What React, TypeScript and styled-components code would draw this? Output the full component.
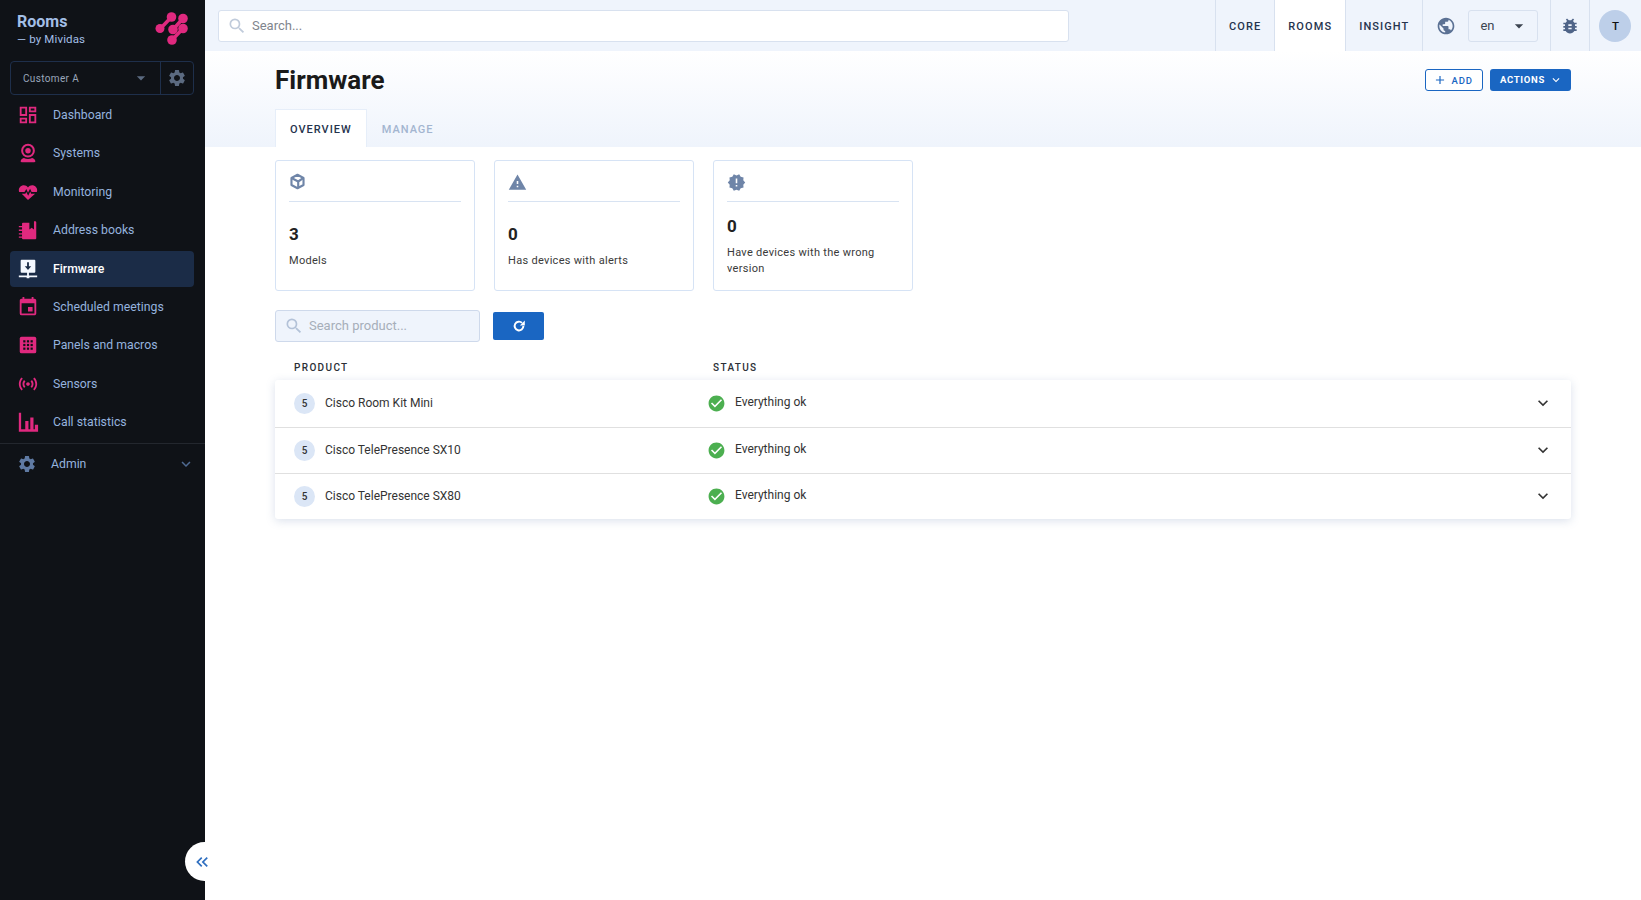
import styled, { createGlobalStyle } from 'styled-components';
import {
  MdSearch,
  MdSettings,
  MdPublic,
  MdBugReport,
  MdArrowDropDown,
  MdEvent,
  MdSensors,
  MdWarning,
  MdNewReleases,
  MdCheckCircle,
  MdExpandMore,
  MdAdd,
  MdKeyboardDoubleArrowLeft,
} from 'react-icons/md';

const PINK = '#e0297f';
const SIDEBAR_BG = '#0f1217';

const GlobalStyle = createGlobalStyle`
  html, body { margin: 0; height: 100%; }
  body { font-family: Roboto, "Liberation Sans", sans-serif; background: #fff; }
  * { box-sizing: border-box; }
`;

const DashboardIcon = () => (
  <svg viewBox="0 0 24 24" width="22" height="22" fill="currentColor">
    <path d="M19 5v2h-4V5h4M9 5v6H5V5h4m10 8v6h-4v-6h4M9 17v2H5v-2h4M21 3h-8v6h8V3zM11 3H3v10h8V3zm10 8h-8v10h8V11zm-10 4H3v6h8v-6z" />
  </svg>
);

const CameraIcon = () => (
  <svg viewBox="0 0 24 24" width="22" height="22" fill="currentColor">
    <path
      fillRule="evenodd"
      d="M12 2a7.5 7.5 0 1 1 0 15 7.5 7.5 0 0 1 0-15zm0 2.2a5.3 5.3 0 1 0 0 10.6 5.3 5.3 0 0 0 0-10.6z"
    />
    <circle cx="12" cy="9.5" r="3" />
    <path d="M7.5 17.5c2.7 1.4 6.3 1.4 9 0 2 .6 3.5 1.8 3.5 3.5 0 .7-.5 1-1 1H5c-.5 0-1-.3-1-1 0-1.7 1.500-2.900 3.500-3.500z" />
  </svg>
);

const HeartIcon = () => (
  <svg viewBox="0 0 24 24" width="20" height="20" fill="currentColor">
    <path d="M12 21.500 4.500 14h4.300l1.200-2 2.200 4.500 2.500-5 1 2.500h4.800L12 21.500z" />
    <path d="M7 4c2 0 3.800 1 5 2.600C13.200 5 15 4 17 4c3.300 0 6 2.600 6 5.800 0 .8-.2 1.500-.4 2.200h-6.300L14.500 8 12 13l-2-4.500L7.800 12H1.400C1.200 11.300 1 10.600 1 9.800 1 6.600 3.700 4 7 4z" />
  </svg>
);

const BookIcon = () => (
  <svg viewBox="0 0 24 24" width="22" height="22" fill="currentColor">
    <path d="M6.500 4h7v7.500l2.500-2 2.500 2V2.500H20c.6 0 1 .4 1 1V21c0 .6-.4 1-1 1H6.500c-.6 0-1-.4-1-1V5c0-.6.400-1 1-1z" />
    <path d="M2 7.500h5v1.500H2zM2 11.500h5v1.500H2zM2 15.500h5v1.500H2zM2 19h5v1.500H2z" />
  </svg>
);

const FirmwareIcon = () => (
  <svg viewBox="0 0 24 24" width="22" height="22">
    <path fill="#f4f8ff" d="M5 2h14c.6 0 1 .4 1 1v12c0 .6-.4 1-1 1h-6v3h9v2H13.500v1h-3v-1H2v-2h9v-3H5c-.6 0-1-.4-1-1V3c0-.6.400-1 1-1z" />
    <path fill="#1b2c47" d="M11 4.500h2V9h2.500L12 13 8.500 9H11z" />
  </svg>
);

const PanelIcon = () => (
  <svg viewBox="0 0 24 24" width="22" height="22">
    <rect x="3" y="3" width="18" height="18" rx="2" fill="currentColor" />
    {[8, 12, 16].map((y) =>
      [8, 12, 16].map((x) => <rect key={`${x}-${y}`} x={x - 1.2} y={y - 1.2} width="2.400" height="2.400" fill={SIDEBAR_BG} />),
    )}
  </svg>
);

const StatsIcon = () => (
  <svg viewBox="0 0 24 24" width="22" height="22" fill="currentColor">
    <path d="M2 2h2.500v18H9v-9h3.500v9h2V7H18v13h1.500v-5H23v7.500H2z" />
  </svg>
);

const CubeIcon = () => (
  <svg viewBox="0 0 24 24" width="17" height="17" fill="none" stroke="currentColor" strokeWidth="3" strokeLinejoin="round">
    <path d="M12 2.500 20.500 7v10L12 21.500 3.500 17V7z" />
    <path d="M3.500 7 13 12l7.500-5M13 12v9" />
  </svg>
);

const RefreshIcon = () => (
  <svg viewBox="0 0 24 24" width="14" height="14">
    <path d="M19.500 12a7.500 7.500 0 1 1-2.300-5.400" fill="none" stroke="#fff" strokeWidth="3.400" />
    <path d="M22 2.500v8.500h-8.500z" fill="#fff" />
  </svg>
);

const Logo = () => (
  <svg viewBox="5 5 33 33" width="33" height="33" fill={PINK}>
    <g stroke={PINK} strokeWidth="3.500" strokeLinecap="round">
      <path d="M10.500 21.500 21 10.500M32.500 12 23 22.500M32.500 22 22 33" />
    </g>
    <circle cx="10" cy="21.500" r="4.500" />
    <circle cx="21.500" cy="10" r="4.800" />
    <circle cx="33" cy="11.500" r="4.800" />
    <circle cx="23" cy="22.500" r="4.800" />
    <circle cx="33" cy="21.500" r="4.800" />
    <circle cx="22" cy="33" r="4.800" />
  </svg>
);

const navItems = [
  { label: 'Dashboard', icon: <DashboardIcon /> },
  { label: 'Systems', icon: <CameraIcon /> },
  { label: 'Monitoring', icon: <HeartIcon /> },
  { label: 'Address books', icon: <BookIcon /> },
  { label: 'Firmware', icon: <FirmwareIcon />, active: true },
  { label: 'Scheduled meetings', icon: <MdEvent size={22} /> },
  { label: 'Panels and macros', icon: <PanelIcon /> },
  { label: 'Sensors', icon: <MdSensors size={22} /> },
  { label: 'Call statistics', icon: <StatsIcon /> },
];

const stats = [
  { icon: <CubeIcon />, value: '3', label: 'Models' },
  { icon: <MdWarning size={19} />, value: '0', label: 'Has devices with alerts' },
  { icon: <MdNewReleases size={19} />, value: '0', label: 'Have devices with the wrong version' },
];

const products = ['Cisco Room Kit Mini', 'Cisco TelePresence SX10', 'Cisco TelePresence SX80'];

export default function App() {
  return (
    <>
      <GlobalStyle />
      <S.Page>
        <S.Sidebar>
          <S.Brand>
            <div>
              <S.BrandName>Rooms</S.BrandName>
              <S.BrandSub>— by Mividas</S.BrandSub>
            </div>
            <Logo />
          </S.Brand>
          <S.Customer>
            <S.CustomerName>
              Customer A
              <MdArrowDropDown size={20} />
            </S.CustomerName>
            <S.CustomerGear>
              <MdSettings size={20} />
            </S.CustomerGear>
          </S.Customer>
          <S.Nav>
            {navItems.map((item) => (
              <S.NavItem key={item.label} $active={item.active}>
                <S.NavIcon $active={item.active}>{item.icon}</S.NavIcon>
                {item.label}
              </S.NavItem>
            ))}
          </S.Nav>
          <S.AdminRow>
            <S.AdminIcon>
              <MdSettings size={20} />
            </S.AdminIcon>
            <S.AdminLabel>Admin</S.AdminLabel>
            <MdExpandMore size={18} />
          </S.AdminRow>
          <S.Collapse>
            <MdKeyboardDoubleArrowLeft size={20} />
          </S.Collapse>
        </S.Sidebar>

        <S.Main>
          <S.TopBar>
            <S.GlobalSearch>
              <MdSearch size={20} />
              Search...
            </S.GlobalSearch>
            <S.TopTab>CORE</S.TopTab>
            <S.TopTab $active>ROOMS</S.TopTab>
            <S.TopTab>INSIGHT</S.TopTab>
            <S.LangCell>
              <MdPublic size={20} />
              <S.LangSelect>
                en
                <MdArrowDropDown size={20} />
              </S.LangSelect>
            </S.LangCell>
            <S.BugCell>
              <MdBugReport size={20} />
            </S.BugCell>
            <S.AvatarCell>
              <S.Avatar>T</S.Avatar>
            </S.AvatarCell>
          </S.TopBar>

          <S.Header>
            <S.TitleRow>
              <S.Title>Firmware</S.Title>
              <S.Actions>
                <S.AddButton>
                  <MdAdd size={14} />
                  ADD
                </S.AddButton>
                <S.ActionsButton>
                  ACTIONS
                  <MdExpandMore size={14} />
                </S.ActionsButton>
              </S.Actions>
            </S.TitleRow>
            <S.Tabs>
              <S.Tab $active>OVERVIEW</S.Tab>
              <S.Tab>MANAGE</S.Tab>
            </S.Tabs>
          </S.Header>

          <S.Content>
            <S.Cards>
              {stats.map((stat) => (
                <S.Card key={stat.label}>
                  <S.CardIcon>{stat.icon}</S.CardIcon>
                  <S.CardBody>
                    <S.CardValue>{stat.value}</S.CardValue>
                    <S.CardLabel>{stat.label}</S.CardLabel>
                  </S.CardBody>
                </S.Card>
              ))}
            </S.Cards>

            <S.Filters>
              <S.ProductSearch>
                <MdSearch size={20} />
                Search product...
              </S.ProductSearch>
              <S.RefreshButton>
                <RefreshIcon />
              </S.RefreshButton>
            </S.Filters>

            <S.TableHead>
              <S.HeadProduct>PRODUCT</S.HeadProduct>
              <span>STATUS</span>
            </S.TableHead>
            <S.Table>
              {products.map((name) => (
                <S.Row key={name}>
                  <S.ProductCell>
                    <S.Count>5</S.Count>
                    {name}
                  </S.ProductCell>
                  <S.StatusCell>
                    <MdCheckCircle size={19} />
                    <span>Everything ok</span>
                  </S.StatusCell>
                  <MdExpandMore size={20} />
                </S.Row>
              ))}
            </S.Table>
          </S.Content>
        </S.Main>
      </S.Page>
    </>
  );
}

const S = {
  Page: styled.div`
    display: flex;
    height: 900px;
    overflow: hidden;
  `,
  Sidebar: styled.aside`
    position: relative;
    flex: 0 0 205px;
    background: ${SIDEBAR_BG};
    padding: 0 11px 0 10px;
    display: flex;
    flex-direction: column;
  `,
  Brand: styled.div`
    height: 61px;
    padding: 12px 6px 0 7px;
    display: flex;
    justify-content: space-between;
    align-items: flex-start;
  `,
  BrandName: styled.div`
    color: #a3bfe6;
    font-size: 16px;
    font-weight: 700;
    line-height: 19px;
  `,
  BrandSub: styled.div`
    color: #a3bfe6;
    font-size: 11.500px;
    line-height: 16px;
    letter-spacing: 0.15px;
  `,
  Customer: styled.div`
    display: flex;
    height: 34px;
    border: 1px solid #1e2f4b;
    border-radius: 4px;
    color: #8c99ad;
  `,
  CustomerName: styled.div`
    flex: 1;
    display: flex;
    align-items: center;
    justify-content: space-between;
    padding: 0 9px 0 12px;
    font-size: 10px;
    letter-spacing: 0.35px;
    color: #9aa7ba;
    svg {
      color: #5b6a80;
    }
  `,
  CustomerGear: styled.div`
    flex: 0 0 33px;
    display: flex;
    align-items: center;
    justify-content: center;
    border-left: 1px solid #1e2f4b;
    color: #5b6a80;
  `,
  Nav: styled.nav`
    display: flex;
    flex-direction: column;
    gap: 2.400px;
    margin-top: 2px;
    padding-bottom: 0.600px;
  `,
  NavItem: styled.div<{ $active?: boolean }>`
    display: flex;
    align-items: center;
    height: 36px;
    border-radius: 4px;
    font-size: 12.250px;
    color: ${({ $active }) => ($active ? '#ffffff' : '#95b3df')};
    background: ${({ $active }) => ($active ? '#1b2c47' : 'transparent')};
    font-weight: ${({ $active }) => ($active ? 500 : 400)};
  `,
  NavIcon: styled.span<{ $active?: boolean }>`
    flex: 0 0 43px;
    display: flex;
    justify-content: center;
    padding-right: 8px;
    color: ${({ $active }) => ($active ? '#ffffff' : PINK)};
  `,
  AdminRow: styled.div`
    display: flex;
    align-items: center;
    margin: 2px -11px 0 -10px;
    padding: 10px 10px 0 17px;
    border-top: 1px solid #23272e;
    color: #95b3df;
    font-size: 12.250px;
    > svg {
      color: #4f6a92;
    }
  `,
  AdminIcon: styled.span`
    flex: 0 0 34px;
    display: flex;
    color: #5f7aa3;
  `,
  AdminLabel: styled.span`
    flex: 1;
  `,
  Collapse: styled.div`
    position: absolute;
    left: 185px;
    top: 842px;
    width: 39px;
    height: 39px;
    border-radius: 50%;
    background: #fff;
    color: #2f6fc0;
    display: flex;
    align-items: center;
    justify-content: center;
    padding-right: 6px;
    z-index: 2;
  `,
  Main: styled.main`
    flex: 1;
    min-width: 0;
  `,
  TopBar: styled.header`
    display: flex;
    align-items: stretch;
    height: 51px;
    background: #eff4fc;
    padding-left: 13px;
  `,
  GlobalSearch: styled.div`
    flex: 0 0 851px;
    height: 32px;
    margin: 10px 146px 0 0;
    display: flex;
    align-items: center;
    gap: 5px;
    padding: 0 8px 1px;
    background: #fff;
    border: 1px solid #d8e1ef;
    border-radius: 3px;
    font-size: 13px;
    color: #7f858d;
    svg {
      color: #c0cbdb;
    }
  `,
  TopTab: styled.div<{ $active?: boolean }>`
    display: flex;
    align-items: center;
    padding: 1px 13px 0;
    border-left: 1px solid #d8e1ef;
    background: ${({ $active }) => ($active ? '#fff' : 'transparent')};
    font-size: 11px;
    font-weight: 500;
    letter-spacing: 1.100px;
    color: #25334d;
  `,
  LangCell: styled.div`
    flex: 0 0 128px;
    display: flex;
    align-items: center;
    gap: 12px;
    padding-left: 13px;
    border-left: 1px solid #d8e1ef;
    color: #5b7194;
  `,
  LangSelect: styled.div`
    flex: 0 0 70px;
    height: 32px;
    display: flex;
    align-items: center;
    justify-content: space-between;
    padding: 0 8px 0 11px;
    border: 1px solid #d8e1ef;
    border-radius: 3px;
    font-size: 13px;
    color: #3c4450;
  `,
  BugCell: styled.div`
    flex: 0 0 39px;
    display: flex;
    align-items: center;
    justify-content: center;
    border-left: 1px solid #d8e1ef;
    color: #4f6488;
  `,
  AvatarCell: styled.div`
    flex: 1;
    display: flex;
    align-items: center;
    padding-left: 9px;
    border-left: 1px solid #d8e1ef;
  `,
  Avatar: styled.div`
    width: 32px;
    height: 32px;
    border-radius: 50%;
    background: #bdcfe9;
    display: flex;
    align-items: center;
    justify-content: center;
    font-size: 11.500px;
    font-weight: 500;
    color: #111;
  `,
  Header: styled.div`
    height: 96px;
    padding: 0 70px;
    background: linear-gradient(#ffffff, #eff4fc);
  `,
  TitleRow: styled.div`
    height: 58px;
    display: flex;
    justify-content: space-between;
    align-items: flex-start;
  `,
  Title: styled.h1`
    margin: 13px 0 0;
    font-size: 26px;
    line-height: 33px;
    font-weight: 700;
    color: #1a1a1a;
  `,
  Actions: styled.div`
    display: flex;
    gap: 7px;
    margin-top: 18px;
  `,
  AddButton: styled.button`
    display: flex;
    align-items: center;
    gap: 5px;
    height: 22px;
    padding: 0 9px 0 7px;
    background: #fff;
    border: 1px solid #1a66c2;
    border-radius: 3px;
    font: 500 9.500px Roboto, sans-serif;
    letter-spacing: 0.9px;
    color: #1a66c2;
  `,
  ActionsButton: styled.button`
    display: flex;
    align-items: center;
    gap: 4px;
    height: 22px;
    padding: 0 8px 1px 10px;
    background: #1a66c2;
    border: none;
    border-radius: 3px;
    font: 700 9.500px Roboto, sans-serif;
    letter-spacing: 0.7px;
    color: #fff;
  `,
  Tabs: styled.div`
    display: flex;
    height: 38px;
  `,
  Tab: styled.div<{ $active?: boolean }>`
    display: flex;
    align-items: center;
    padding: 2px 14px 0;
    font-size: 11px;
    font-weight: 500;
    letter-spacing: 1px;
    background: ${({ $active }) => ($active ? '#fff' : 'transparent')};
    border: 1px solid ${({ $active }) => ($active ? '#e6eef9' : 'transparent')};
    border-bottom: none;
    color: ${({ $active }) => ($active ? '#25334d' : '#a3b5d0')};
  `,
  Content: styled.div`
    padding: 13px 70px 0;
  `,
  Cards: styled.div`
    display: flex;
    gap: 19px;
  `,
  Card: styled.div`
    flex: 0 0 200px;
    height: 131px;
    padding: 12px 13px 0;
    display: flex;
    flex-direction: column;
    background: #fff;
    border: 1px solid #d6e3f5;
    border-radius: 3px;
  `,
  CardIcon: styled.div`
    height: 29px;
    display: flex;
    align-items: flex-start;
    border-bottom: 1px solid #d8e3f2;
    color: #6f85a8;
  `,
  CardBody: styled.div`
    flex: 1;
    display: flex;
    flex-direction: column;
    justify-content: center;
  `,
  CardValue: styled.div`
    font-size: 17px;
    line-height: 22px;
    font-weight: 700;
    color: #222;
  `,
  CardLabel: styled.div`
    margin-top: 8px;
    font-size: 11px;
    line-height: 16px;
    letter-spacing: 0.3px;
    color: #3a3a3a;
  `,
  Filters: styled.div`
    display: flex;
    align-items: center;
    gap: 13px;
    margin-top: 19px;
  `,
  ProductSearch: styled.div`
    flex: 0 0 205px;
    height: 32px;
    display: flex;
    align-items: center;
    gap: 5px;
    padding: 0 8px 1px;
    background: #eff4fc;
    border: 1px solid #ced9eb;
    border-radius: 3px;
    font-size: 13px;
    color: #a6aeb9;
    svg {
      color: #b3c2d8;
    }
  `,
  RefreshButton: styled.button`
    width: 51px;
    height: 28px;
    display: flex;
    align-items: center;
    justify-content: center;
    padding: 0;
    background: #1a66c2;
    border: none;
    border-radius: 2px;
    color: #fff;
  `,
  TableHead: styled.div`
    display: flex;
    height: 38px;
    align-items: flex-end;
    padding: 0 0 7px 19px;
    font-size: 10px;
    font-weight: 500;
    letter-spacing: 1.350px;
    color: #2b2f36;
  `,
  HeadProduct: styled.span`
    flex: 0 0 419px;
  `,
  Table: styled.div`
    background: #fff;
    border-radius: 3px;
    box-shadow: 0 2px 10px rgba(90, 120, 170, 0.22);
  `,
  Row: styled.div`
    height: 46px;
    display: flex;
    align-items: center;
    padding: 0 18px 1px 19px;
    font-size: 12px;
    color: #333;
    border-bottom: 1px solid #e0e0e0;
    &:first-child {
      height: 48px;
    }
    &:last-child {
      height: 45px;
      border-bottom: none;
    }
  `,
  ProductCell: styled.div`
    flex: 0 0 413px;
    display: flex;
    align-items: center;
    gap: 10px;
  `,
  Count: styled.span`
    width: 21px;
    height: 21px;
    border-radius: 50%;
    background: #dbe6f6;
    display: flex;
    align-items: center;
    justify-content: center;
    font-size: 10px;
    font-weight: 500;
  `,
  StatusCell: styled.div`
    flex: 1;
    display: flex;
    align-items: center;
    gap: 9px;
    svg {
      color: #4caf50;
    }
    span {
      margin-top: -2px;
    }
  `,
};
